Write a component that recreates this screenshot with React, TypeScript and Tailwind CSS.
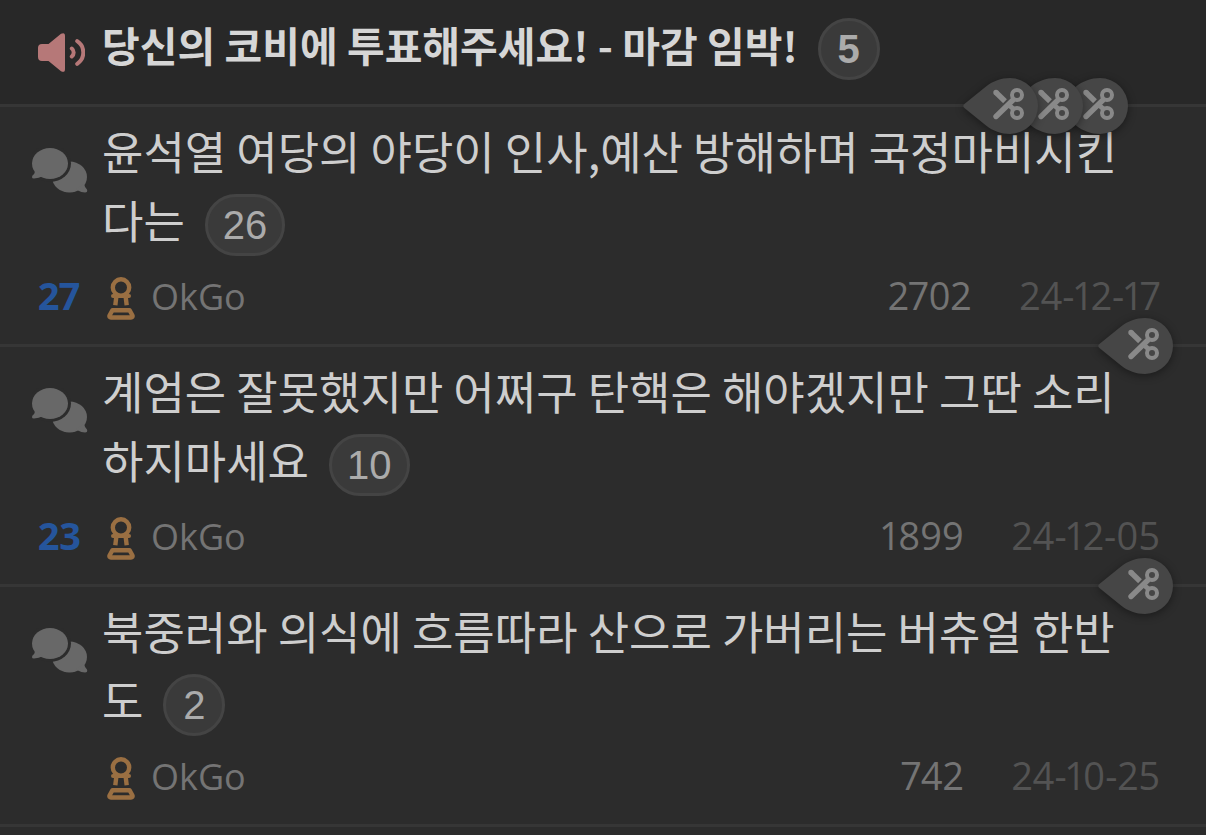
import React from "react";

type Post = {
  id: number;
  title: string;
  comments: number;
  votes?: number;
  author: string;
  views: number;
  date: string;
  clips: number;
};

const posts: Post[] = [
  { id: 1, title: "윤석열 여당의 야당이 인사,예산 방해하며 국정마비시킨다는", comments: 26, votes: 27, author: "OkGo", views: 2702, date: "24-12-17", clips: 3 },
  { id: 2, title: "계엄은 잘못했지만 어쩌구 탄핵은 해야겠지만 그딴 소리하지마세요", comments: 10, votes: 23, author: "OkGo", views: 1899, date: "24-12-05", clips: 1 },
  { id: 3, title: "북중러와 의식에 흐름따라 산으로 가버리는 버츄얼 한반도", comments: 2, author: "OkGo", views: 742, date: "24-10-25", clips: 1 },
];

function SpeakerIcon() {
  return (
    <svg viewBox="0 0 48 40" className="h-10 w-12 text-[#b67878]" aria-hidden="true">
      <path
        fill="currentColor"
        d="M5 11h6.5L24 .8Q28-1.200 28 3v33q0 4.200-4 2.200L11.500 28H5q-4 0-4-4v-9q0-4 4-4z"
      />
      <path
        d="M34.800 15.500a5.200 5.200 0 0 1 0 8M40.200 8.200a13.500 13.500 0 0 1 0 22.600"
        fill="none"
        stroke="currentColor"
        strokeWidth="4"
        strokeLinecap="round"
      />
    </svg>
  );
}

function CommentsIcon() {
  return (
    <svg viewBox="0 0 56 46" className="h-[46px] w-14 text-[#686868]" aria-hidden="true">
      <g fill="currentColor">
        <ellipse cx="37.500" cy="29" rx="17.500" ry="15.500" />
        <path d="M52 36q1 4 3 5.500 1 3-2 3-5-.5-9-3z" />
      </g>
      <ellipse cx="18" cy="15.500" rx="21" ry="18.500" fill="#2c2c2c" />
      <g fill="currentColor">
        <ellipse cx="18" cy="15.500" rx="18" ry="15.500" />
        <path d="M3 22q0 4-2.500 5.500-1.500 3 1.500 3 5-.2 9-2.500z" />
      </g>
    </svg>
  );
}

function PawnIcon() {
  return (
    <svg viewBox="0 0 28 43" className="h-[43px] w-7 text-[#9a6f42]" aria-hidden="true">
      <g fill="none" stroke="currentColor" strokeLinecap="round" strokeLinejoin="round">
        <circle cx="14" cy="10.500" r="8.200" strokeWidth="4.400" />
        <path d="M6 19h16" strokeWidth="4" />
        <path d="M9.300 20L8.300 28.300M18.700 20l1 8.300" strokeWidth="4.400" strokeLinecap="butt" />
        <path d="M5.500 33.200h17l3 5.300q.5 2-1.500 2H4q-2 0-1.500-2z" strokeWidth="4.400" />
      </g>
    </svg>
  );
}

function ClipMarker() {
  return (
    <svg
      viewBox="0 0 75 56"
      className="h-14 w-[75px] overflow-visible drop-shadow-[0_2px_4px_rgba(0,0,0,0.4)]"
      aria-hidden="true"
    >
      <path
        fill="#464646"
        d="M2 25.500L23 8.500C30 3 38 0 47 0a28 28 0 0 1 0 56c-9 0-17-3-24-8.500L2 30.500q-3.500-2.500 0-5z"
      />
      <g fill="none" stroke="#898989">
        <circle cx="54" cy="17" r="5" strokeWidth="4" />
        <circle cx="54" cy="35" r="5" strokeWidth="4" />
        <path d="M33 38.500L50 22" strokeWidth="5.400" strokeLinecap="round" />
        <path d="M33 14.500L42 23.300" strokeWidth="5.400" />
        <path d="M33 14.500h.01" strokeWidth="5.400" strokeLinecap="round" />
        <path d="M46.500 27.500L51 31.500" strokeWidth="5" />
      </g>
    </svg>
  );
}

function CountBadge({ count }: { count: number }) {
  return (
    <span className="-mt-2 -mb-1 ml-5 inline-flex h-[62px] min-w-[62px] items-center justify-center rounded-full border-3 border-[#444444] bg-[#3a3a3a] px-[15px] align-middle font-['Liberation_Sans',sans-serif] text-[40px] leading-none text-[#ababab]">
      {count}
    </span>
  );
}

function PostRow({ post }: { post: Post }) {
  return (
    <li className="relative border-b-3 border-[#363636] pt-[9px] pb-5">
      <div className="grid grid-cols-[102px_1fr] pr-16">
        <div className="pt-8 pl-8">
          <CommentsIcon />
        </div>
        <a href={`#post-${post.id}`} className="block min-h-[138px] text-[45px] leading-[69px] break-all text-[#cecece]">
          {post.title}
          <CountBadge count={post.comments} />
        </a>
      </div>
      <div className="mt-[14px] flex h-14 items-baseline pr-[46px] pl-[38px] font-['Open_Sans','Noto_Sans',sans-serif] text-[38px] leading-[54px] proportional-nums">
        <span className="w-[69px] font-bold text-[#25559c]">{post.votes}</span>
        <span className="mt-1 mr-4 self-center">
          <PawnIcon />
        </span>
        <a href={`#user-${post.author}`} className="text-4xl leading-[54px] text-[#747474]">
          {post.author}
        </a>
        <span className="ml-auto text-[#747474]">{post.views}</span>
        <time className="ml-12 text-[#535353]">{post.date}</time>
      </div>
      <div className={`absolute -top-[29px] z-10 flex flex-row-reverse ${post.clips > 1 ? "right-[78px]" : "right-[33px]"}`}>
        {Array.from({ length: post.clips }, (_, i) => (
          <span key={i} className={i > 0 ? "relative -mr-[30px]" : ""}>
            <ClipMarker />
          </span>
        ))}
      </div>
    </li>
  );
}

export default function App() {
  return (
    <main className="min-h-screen bg-[#2c2c2c] font-['Noto_Sans_CJK_KR',sans-serif]">
      <header className="grid grid-cols-[102px_1fr] border-b-3 border-[#363636] bg-[#282828] pt-[10px] pb-[25px]">
        <div className="pt-[23px] pl-[37px]">
          <SpeakerIcon />
        </div>
        <a href="#notice" className="block h-[69px] text-[41px] leading-[69px] font-bold text-[#d6d6d6]">
          당신의 코비에 투표해주세요! - 마감 임박!
          <CountBadge count={5} />
        </a>
      </header>
      <ul>
        {posts.map((post) => (
          <PostRow key={post.id} post={post} />
        ))}
      </ul>
    </main>
  );
}
